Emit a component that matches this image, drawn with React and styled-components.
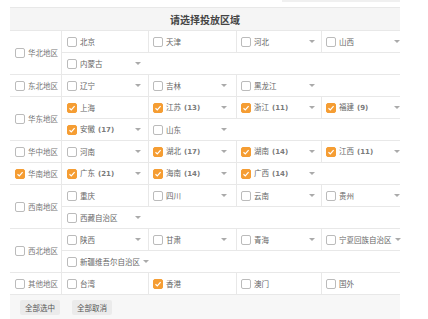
import React from 'react'
import styled, { createGlobalStyle } from 'styled-components'

const GlobalStyle = createGlobalStyle`
  body {
    margin: 0;
    background: #fff;
    font-family: "Noto Sans CJK SC", "Noto Sans", sans-serif;
  }
`

const Page = styled.div`
  width: 428px;
  height: 319px;
  overflow: hidden;
  padding-left: 10px;
  box-sizing: border-box;
`

const TopStrip = styled.div`
  width: 118px;
  height: 2px;
  margin-left: 272px;
  margin-bottom: 5px;
  background: #f0f0f0;
`

const Panel = styled.div`
  width: 390px;
`

const Header = styled.div`
  height: 24px;
  box-sizing: border-box;
  border-top: 1px solid #e8e8e8;
  border-bottom: 1px solid #e8e8e8;
  background: #f5f5f5;
  display: flex;
  align-items: center;
  justify-content: center;
  font-size: 10px;
  font-weight: bold;
  color: #444;
`

const Group = styled.div`
  display: grid;
  grid-template-columns: 52px 338px;
  border-bottom: 1px solid #e8e8e8;
`

const RegionCell = styled.div`
  display: flex;
  align-items: center;
  gap: 3px;
  padding-left: 5px;
  border-right: 1px solid #e8e8e8;
  box-sizing: border-box;
`

const SubRow = styled.div`
  display: grid;
  grid-template-columns: 86px 88px 85px 79px;
  height: 21px;

  & + & {
    border-top: 1px solid #e8e8e8;
  }
`

const Cell = styled.div`
  display: flex;
  align-items: center;
  padding-left: 5px;
  box-sizing: border-box;

  &:not(:first-child) {
    border-left: 1px solid #e8e8e8;
    padding-left: 4px;
  }
`

const Inner = styled.div`
  width: 74px;
  display: flex;
  align-items: center;
  gap: 3px;
`

const Label = styled.span`
  font-size: 7.5px;
  color: ${p => (p.$region ? '#777' : '#666')};
  white-space: nowrap;
  line-height: 1;
`

const Count = styled.span`
  font-family: "DejaVu Sans", sans-serif;
  font-weight: bold;
  font-size: 7px;
  color: #7a7a7a;
  margin-left: 3px;
`

const Arrow = styled.span`
  margin-left: auto;
  flex-shrink: 0;
  width: 0;
  height: 0;
  border-left: 3px solid transparent;
  border-right: 3px solid transparent;
  border-top: 3px solid #aaa;
`

const Box = styled.span`
  width: 10px;
  height: 10px;
  flex-shrink: 0;
  box-sizing: border-box;
  border: 1px solid ${p => (p.$on ? '#f59d33' : '#bbb')};
  background: ${p => (p.$on ? '#f59d33' : '#fff')};
  border-radius: 2px;
  display: flex;
  align-items: center;
  justify-content: center;
`

const Footer = styled.div`
  height: 26px;
  background: #f7f7f7;
  display: flex;
  align-items: flex-start;
  gap: 12px;
  padding: 5px 0 0 10px;
  box-sizing: border-box;
`

const Button = styled.button`
  width: 40px;
  height: 15px;
  padding: 0;
  border: none;
  border-radius: 2px;
  background: #ebebeb;
  font-family: inherit;
  font-size: 7.5px;
  color: #555;
`

const Check = ({ on }) => (
  <Box $on={on}>
    {on && (
      <svg width="8" height="8" viewBox="0 0 8 8">
        <path d="M1.5 4.2 L3.3 5.9 L6.6 2.2" fill="none" stroke="#fff" strokeWidth="1.2" />
      </svg>
    )}
  </Box>
)

// [name, checked, count, hasArrow]
const regions = [
  { name: '华北地区', rows: [
    [['北京'], ['天津'], ['河北', 0, 0, 1], ['山西', 0, 0, 1]],
    [['内蒙古', 0, 0, 1]],
  ] },
  { name: '东北地区', rows: [
    [['辽宁', 0, 0, 1], ['吉林', 0, 0, 1], ['黑龙江', 0, 0, 1]],
  ] },
  { name: '华东地区', rows: [
    [['上海', 1], ['江苏', 1, 13, 1], ['浙江', 1, 11, 1], ['福建', 1, 9, 1]],
    [['安徽', 1, 17, 1], ['山东', 0, 0, 1]],
  ] },
  { name: '华中地区', rows: [
    [['河南', 0, 0, 1], ['湖北', 1, 17, 1], ['湖南', 1, 14, 1], ['江西', 1, 11, 1]],
  ] },
  { name: '华南地区', checked: true, rows: [
    [['广东', 1, 21, 1], ['海南', 1, 14, 1], ['广西', 1, 14, 1]],
  ] },
  { name: '西南地区', rows: [
    [['重庆'], ['四川', 0, 0, 1], ['云南', 0, 0, 1], ['贵州', 0, 0, 1]],
    [['西藏自治区', 0, 0, 1]],
  ] },
  { name: '西北地区', rows: [
    [['陕西', 0, 0, 1], ['甘肃', 0, 0, 1], ['青海', 0, 0, 1], ['宁夏回族自治区', 0, 0, 1]],
    [['新疆维吾尔自治区', 0, 0, 1]],
  ] },
  { name: '其他地区', rows: [
    [['台湾'], ['香港', 1], ['澳门'], ['国外']],
  ] },
]

export default function App() {
  return (
    <Page>
      <GlobalStyle />
      <TopStrip />
      <Panel>
        <Header>请选择投放区域</Header>
        {regions.map(r => (
          <Group key={r.name}>
            <RegionCell>
              <Check on={r.checked} />
              <Label $region>{r.name}</Label>
            </RegionCell>
            <div>
              {r.rows.map((row, i) => (
                <SubRow key={i}>
                  {row.map(([name, on, count, arrow]) => (
                    <Cell key={name}>
                      <Inner>
                        <Check on={!!on} />
                        <Label>
                          {name}
                          {count ? <Count>({count})</Count> : null}
                        </Label>
                        {arrow ? <Arrow /> : null}
                      </Inner>
                    </Cell>
                  ))}
                </SubRow>
              ))}
            </div>
          </Group>
        ))}
        <Footer>
          <Button>全部选中</Button>
          <Button>全部取消</Button>
        </Footer>
      </Panel>
    </Page>
  )
}
